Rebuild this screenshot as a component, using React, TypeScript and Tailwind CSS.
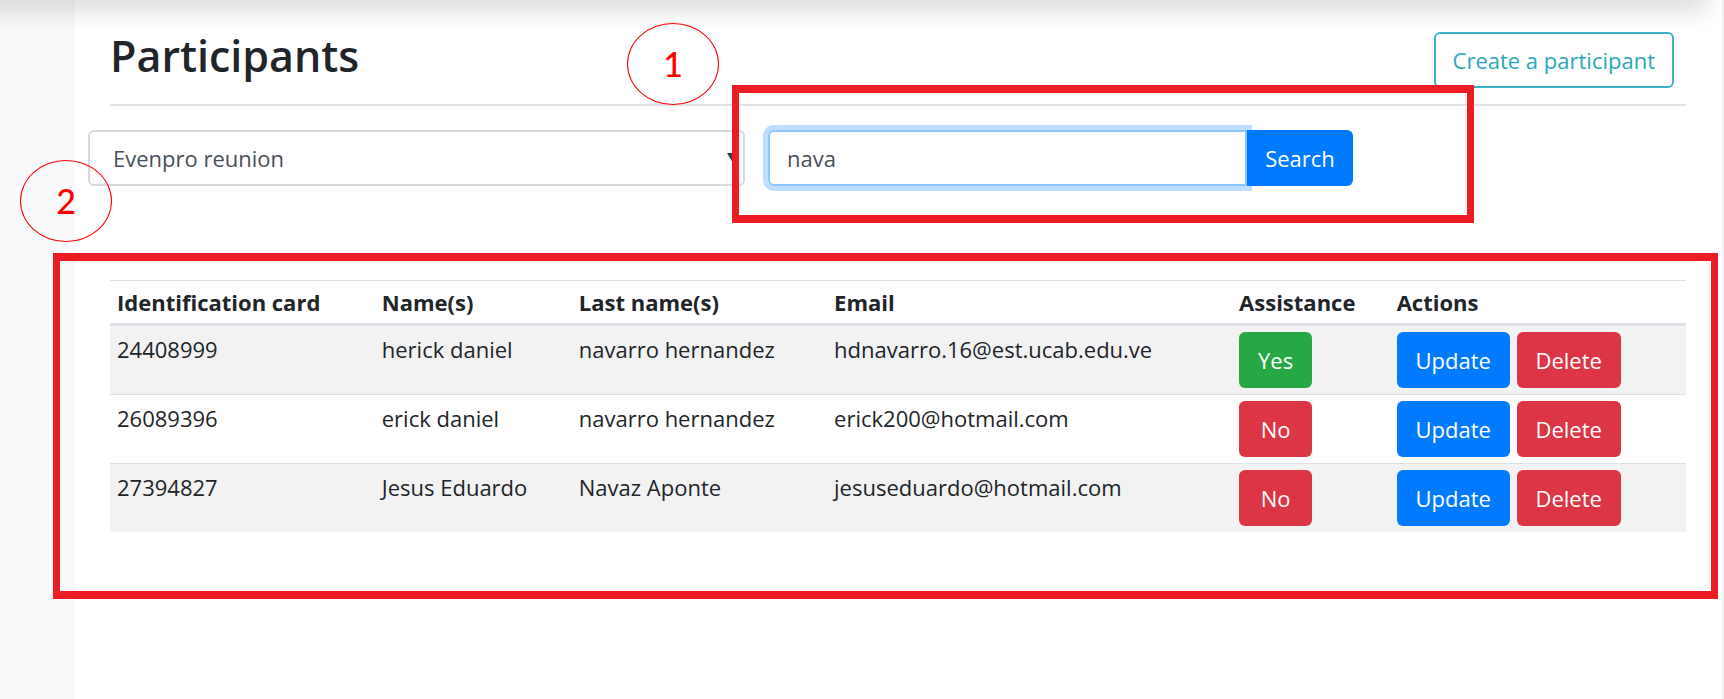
import { useState } from "react";

type Participant = {
  card: string;
  name: string;
  lastName: string;
  email: string;
  assistance: boolean;
};

const participants: Participant[] = [
  { card: "24408999", name: "herick daniel", lastName: "navarro hernandez", email: "hdnavarro.16@est.ucab.edu.ve", assistance: true },
  { card: "26089396", name: "erick daniel", lastName: "navarro hernandez", email: "erick200@hotmail.com", assistance: false },
  { card: "27394827", name: "Jesus Eduardo", lastName: "Navaz Aponte", email: "jesuseduardo@hotmail.com", assistance: false },
];

const columns = [
  { label: "Identification card", width: "w-[16.8%]" },
  { label: "Name(s)", width: "w-[12.5%]" },
  { label: "Last name(s)", width: "w-[16.2%]" },
  { label: "Email", width: "w-[25.7%]" },
  { label: "Assistance", width: "w-[10%]" },
  { label: "Actions", width: "w-[18.8%]" },
];

const button = "h-14 rounded-md text-white whitespace-nowrap";

function Marker({ value, place }: { value: string; place: string }) {
  return (
    <div
      className={`pointer-events-none absolute z-20 flex h-[82px] w-[92px] items-center justify-center rounded-[50%] border border-[#ff0000] font-['Lato',sans-serif] text-[34px] font-medium leading-none text-[#ff0000] ${place}`}
    >
      {value}
    </div>
  );
}

export default function App() {
  const [query, setQuery] = useState("nava");

  return (
    <div className="relative flex min-h-screen overflow-hidden bg-white font-['Open_Sans','Noto_Sans',sans-serif] text-[22px] text-[#212529]">
      <div className="pointer-events-none absolute -left-10 right-4 -top-10 z-10 h-10 shadow-[0_12px_23px_rgba(0,0,0,0.13)]" />
      <aside className="w-[75px] shrink-0 bg-[#f8f9fb]" />
      <main className="min-w-0 flex-1 border-r-2 border-[#f1f1f1] pl-[35px] pr-9 pt-7">
        <header className="relative flex items-start justify-between border-b-2 border-[#e0e4e8] pb-4 pr-3">
          <h1 className="text-[43px] font-semibold leading-[56px]">Participants</h1>
          <button type="button" className="mt-1 h-14 whitespace-nowrap rounded-md border-2 border-[#3fb3c5] px-[17px] text-[#2ba7bc]">
            Create a participant
          </button>
          <Marker value="1" place="left-[517px] -top-[5px]" />
        </header>

        <form
          className="relative -ml-[22px] mt-6 grid grid-cols-[657fr_585fr_310fr] gap-[23px]"
          onSubmit={(event) => event.preventDefault()}
        >
          <div className="relative">
            <select
              aria-label="Event"
              className="h-14 w-full appearance-none rounded-md border-2 border-[#d5dade] bg-white pl-[23px] pr-8 text-[#495057]"
            >
              <option>Evenpro reunion</option>
            </select>
            <svg viewBox="0 0 12 10" className="pointer-events-none absolute right-1.5 top-[23px] h-2.5 w-3 fill-[#343a40]" aria-hidden="true">
              <path d="M0 0h12L6 10z" />
            </svg>
          </div>
          <div className="relative flex">
            <input
              type="text"
              aria-label="Search participants"
              value={query}
              onChange={(event) => setQuery(event.target.value)}
              className="h-14 min-w-0 flex-1 rounded-l-md border-2 border-[#8ec5ff] px-[17px] text-[#495057] shadow-[0_0_0_5px_#bfdeff] outline-none"
            />
            <button type="submit" className={`${button} relative w-[106px] rounded-l-none bg-[#007bff]`}>
              Search
            </button>
            <div className="pointer-events-none absolute -bottom-[37px] -left-9 -right-[121px] -top-[45px] z-10 border-x-7 border-y-8 border-[#ed1c24]" />
          </div>
          <Marker value="2" place="-left-[68px] top-[30px]" />
        </form>

        <section className="relative mt-[94px]">
          <table className="w-full table-fixed border-separate border-spacing-0 text-left">
            <thead>
              <tr>
                {columns.map((column) => (
                  <th
                    key={column.label}
                    scope="col"
                    className={`${column.width} border-b-3 border-t border-[#dee2e6] px-[7px] py-1.5 font-bold leading-[30px]`}
                  >
                    {column.label}
                  </th>
                ))}
              </tr>
            </thead>
            <tbody className="[&_td]:px-[7px] [&_td]:py-1.5 [&_td]:align-top [&_td]:leading-[34px] [&>tr+tr>td]:border-t [&>tr+tr>td]:border-[#dee2e6] [&>tr:nth-child(odd)>td]:bg-[#f2f2f2]">
              {participants.map((person) => (
                <tr key={person.card}>
                  <td>{person.card}</td>
                  <td>{person.name}</td>
                  <td>{person.lastName}</td>
                  <td>{person.email}</td>
                  <td>
                    <button
                      type="button"
                      className={`${button} block w-[73px] ${person.assistance ? "bg-[#28a745]" : "bg-[#dc3545]"}`}
                    >
                      {person.assistance ? "Yes" : "No"}
                    </button>
                  </td>
                  <td>
                    <div className="flex gap-[7px]">
                      <button type="button" className={`${button} w-[113px] bg-[#007bff]`}>Update</button>
                      <button type="button" className={`${button} w-[104px] bg-[#dc3545]`}>Delete</button>
                    </div>
                  </td>
                </tr>
              ))}
            </tbody>
          </table>
          <div className="pointer-events-none absolute -bottom-[67px] -left-[57px] -right-8 -top-[27px] z-10 border-x-7 border-y-8 border-[#ed1c24]" />
        </section>
      </main>
    </div>
  );
}
